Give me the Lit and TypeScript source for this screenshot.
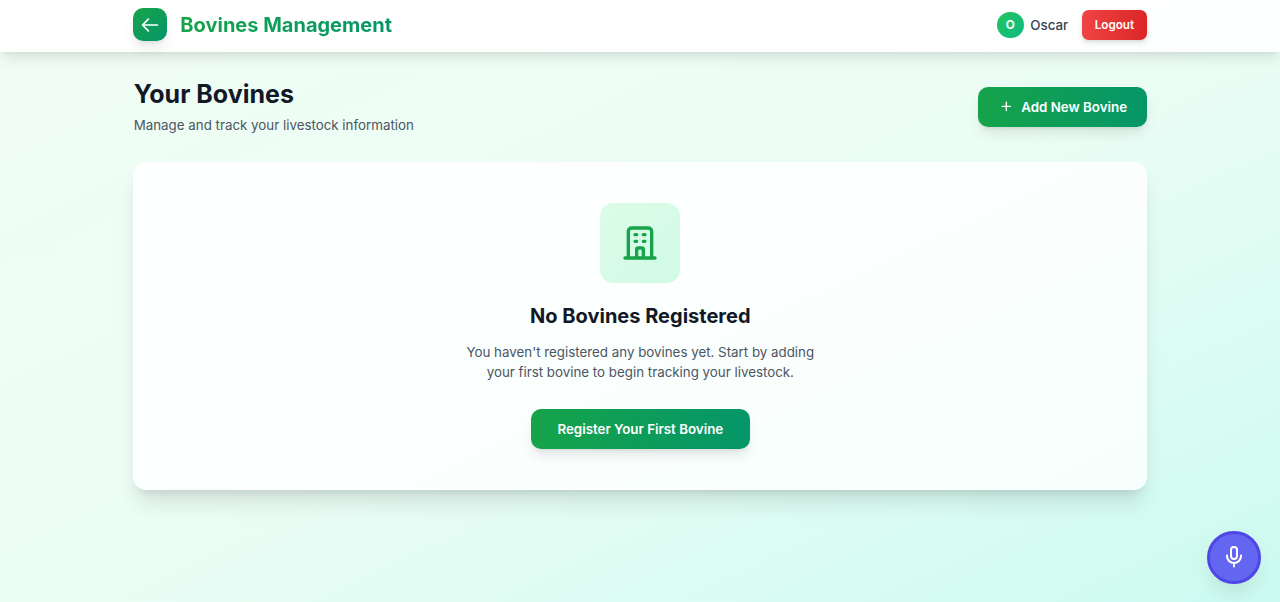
import { LitElement, html, css } from "lit";
import { customElement, property } from "lit/decorators.js";

@customElement("app-header")
export class AppHeader extends LitElement {
  @property({ type: String }) heading = "";
  @property({ type: String }) user = "";

  static styles = css`
    :host {
      display: block;
      position: relative;
      background: rgba(255, 255, 255, 0.9);
      box-shadow:
        0 8.33px 12.5px -2.5px rgba(0, 0, 0, 0.1),
        0 3.33px 5px -3.33px rgba(0, 0, 0, 0.1);
    }
    .inner {
      display: flex;
      align-items: center;
      justify-content: space-between;
      box-sizing: border-box;
      max-width: 1066.67px;
      height: 51.8px;
      margin: 0 auto;
      padding: 0 26.2px 1.7px 27px;
    }
    .group {
      display: flex;
      align-items: center;
      gap: 13.33px;
    }
    .back {
      display: flex;
      align-items: center;
      justify-content: center;
      width: 33.33px;
      height: 33.33px;
      margin: 0 0.3px 0.8px -0.3px;
      padding: 0;
      border: 0;
      border-radius: 10px;
      color: white;
      background: linear-gradient(to bottom right, #16a34a, #059669);
      box-shadow:
        0 8.33px 12.5px -2.5px rgba(0, 0, 0, 0.1),
        0 3.33px 5px -3.33px rgba(0, 0, 0, 0.1);
      cursor: pointer;
    }
    .back svg {
      width: 20px;
      height: 20px;
    }
    h1 {
      margin: 0;
      font-size: 20px;
      line-height: 26.67px;
      font-weight: 700;
      color: transparent;
      background: linear-gradient(to right, #16a34a, #059669);
      background-clip: text;
      -webkit-background-clip: text;
    }
    .user {
      display: flex;
      align-items: center;
      gap: 6.67px;
      font-size: 13.33px;
      line-height: 20px;
      font-weight: 500;
      color: #374151;
    }
    .avatar {
      display: flex;
      align-items: center;
      justify-content: center;
      width: 26.67px;
      height: 26.67px;
      border-radius: 50%;
      font-size: 11.67px;
      font-weight: 700;
      color: white;
      background: linear-gradient(to bottom right, #22c55e, #10b981);
    }
    .logout {
      padding: 6.67px 13.1px;
      border: 0;
      border-radius: 6.67px;
      font: 600 11.67px/16.67px Inter, sans-serif;
      color: white;
      background: linear-gradient(to right, #ef4444, #dc2626);
      box-shadow:
        0 3.33px 5px -0.83px rgba(0, 0, 0, 0.1),
        0 1.67px 3.33px -1.67px rgba(0, 0, 0, 0.1);
      cursor: pointer;
    }
  `;

  render() {
    return html`
      <div class="inner">
        <div class="group">
          <button class="back" aria-label="Back">
            <svg
              viewBox="0 0 24 24"
              fill="none"
              stroke="currentColor"
              stroke-width="2"
              stroke-linecap="round"
              stroke-linejoin="round"
            >
              <path d="M10 19l-7-7m0 0l7-7m-7 7h18" />
            </svg>
          </button>
          <h1>${this.heading}</h1>
        </div>
        <div class="group">
          <div class="user">
            <span class="avatar">${this.user.charAt(0)}</span>
            <span>${this.user}</span>
          </div>
          <button class="logout">Logout</button>
        </div>
      </div>
    `;
  }
}

@customElement("primary-button")
export class PrimaryButton extends LitElement {
  @property({ type: String }) label = "";
  @property({ type: Boolean }) plus = false;

  static styles = css`
    :host {
      display: inline-block;
    }
    button {
      display: flex;
      align-items: center;
      gap: 6.67px;
      padding: 10px 26.4px;
      border: 0;
      border-radius: 10px;
      font: 600 13.33px/20px Inter, sans-serif;
      color: white;
      background: linear-gradient(to right, #16a34a, #059669);
      box-shadow:
        0 8.33px 12.5px -2.5px rgba(0, 0, 0, 0.1),
        0 3.33px 5px -3.33px rgba(0, 0, 0, 0.1);
      white-space: nowrap;
      cursor: pointer;
    }
    .with-icon {
      padding: 10px 19.6px 10px 20px;
    }
    svg {
      width: 16.67px;
      height: 16.67px;
    }
  `;

  render() {
    return html`
      <button class=${this.plus ? "with-icon" : ""}>
        ${this.plus
          ? html`<svg
              viewBox="0 0 24 24"
              fill="none"
              stroke="currentColor"
              stroke-width="2"
              stroke-linecap="round"
              stroke-linejoin="round"
            >
              <path d="M12 6v6m0 0v6m0-6h6m-6 0H6" />
            </svg>`
          : ""}
        ${this.label}
      </button>
    `;
  }
}

@customElement("empty-state")
export class EmptyState extends LitElement {
  static styles = css`
    :host {
      display: flex;
      flex-direction: column;
      align-items: center;
      padding: 40px 39.4px 40px 40px;
      border: 1px solid rgba(255, 255, 255, 0.2);
      border-radius: 13.33px;
      text-align: center;
      background: rgba(255, 255, 255, 0.8);
      box-shadow:
        0 16.67px 20.83px -4.17px rgba(0, 0, 0, 0.1),
        0 6.67px 8.33px -5px rgba(0, 0, 0, 0.1);
    }
    .icon {
      display: flex;
      align-items: center;
      justify-content: center;
      width: 80px;
      height: 80px;
      margin-bottom: 20px;
      border-radius: 13.33px;
      color: #16a34a;
      background: linear-gradient(to bottom right, #dcfce7, #d1fae5);
    }
    .icon svg {
      width: 40px;
      height: 40px;
    }
    h3 {
      margin: 0 0 12.8px;
      font-size: 20px;
      line-height: 26.67px;
      font-weight: 700;
      color: #111827;
    }
    p {
      max-width: 373.33px;
      margin: 0 0 27.2px;
      font-size: 13.33px;
      line-height: 20px;
      color: #4b5563;
    }
  `;

  render() {
    return html`
      <div class="icon">
        <svg
          viewBox="0 0 24 24"
          fill="none"
          stroke="currentColor"
          stroke-width="2"
          stroke-linecap="round"
          stroke-linejoin="round"
        >
          <path
            d="M19 21V5a2 2 0 00-2-2H7a2 2 0 00-2 2v16m14 0h2m-2 0h-5m-9 0H3m2 0h5M9 7h1m-1 4h1m4-4h1m-1 4h1m-5 10v-5a1 1 0 011-1h2a1 1 0 011 1v5m-4 0h4"
          />
        </svg>
      </div>
      <h3>No Bovines Registered</h3>
      <p>
        You haven't registered any bovines yet. Start by adding your first
        bovine to begin tracking your livestock.
      </p>
      <primary-button label="Register Your First Bovine"></primary-button>
    `;
  }
}

@customElement("app-root")
export class AppRoot extends LitElement {
  static styles = css`
    :host {
      display: block;
      height: 100vh;
      overflow: hidden;
      font-family: Inter, sans-serif;
      background: linear-gradient(
        to bottom right,
        #f0fdf4,
        #ecfdf5,
        #ccfbf1
      );
    }
    main {
      box-sizing: border-box;
      max-width: 1066.67px;
      margin: 0 auto;
      padding: 26.67px;
    }
    .title-row {
      display: flex;
      align-items: center;
      justify-content: space-between;
      margin-bottom: 26.67px;
      padding-left: 0.4px;
    }
    h2 {
      margin: 0 0 4.67px;
      font-size: 25px;
      line-height: 32px;
      font-weight: 700;
      color: #111827;
    }
    p {
      margin: 0;
      font-size: 13.33px;
      line-height: 20px;
      color: #4b5563;
    }
    /* floats over the page in the corner */
    .mic {
      position: fixed;
      right: 19.5px;
      bottom: 18px;
      display: flex;
      align-items: center;
      justify-content: center;
      box-sizing: border-box;
      width: 53.33px;
      height: 53.33px;
      padding: 0;
      border: 3px solid #4f46e5;
      border-radius: 50%;
      color: white;
      background: #6366f1;
      box-shadow:
        0 16.67px 20.83px -4.17px rgba(0, 0, 0, 0.06),
        0 6.67px 26.67px rgba(0, 0, 0, 0.05);
      cursor: pointer;
    }
    .mic svg {
      width: 24px;
      height: 24px;
    }
  `;

  render() {
    return html`
      <app-header heading="Bovines Management" user="Oscar"></app-header>
      <main>
        <div class="title-row">
          <div>
            <h2>Your Bovines</h2>
            <p>Manage and track your livestock information</p>
          </div>
          <primary-button label="Add New Bovine" plus></primary-button>
        </div>
        <empty-state></empty-state>
      </main>
      <button class="mic" aria-label="Voice input">
        <svg
          viewBox="0 0 24 24"
          fill="none"
          stroke="currentColor"
          stroke-width="2"
          stroke-linecap="round"
          stroke-linejoin="round"
        >
          <rect x="9" y="2" width="6" height="12" rx="3" />
          <path d="M19 10.5v.5a7 7 0 01-14 0v-.5M12 18v3.5" />
        </svg>
      </button>
    `;
  }
}
